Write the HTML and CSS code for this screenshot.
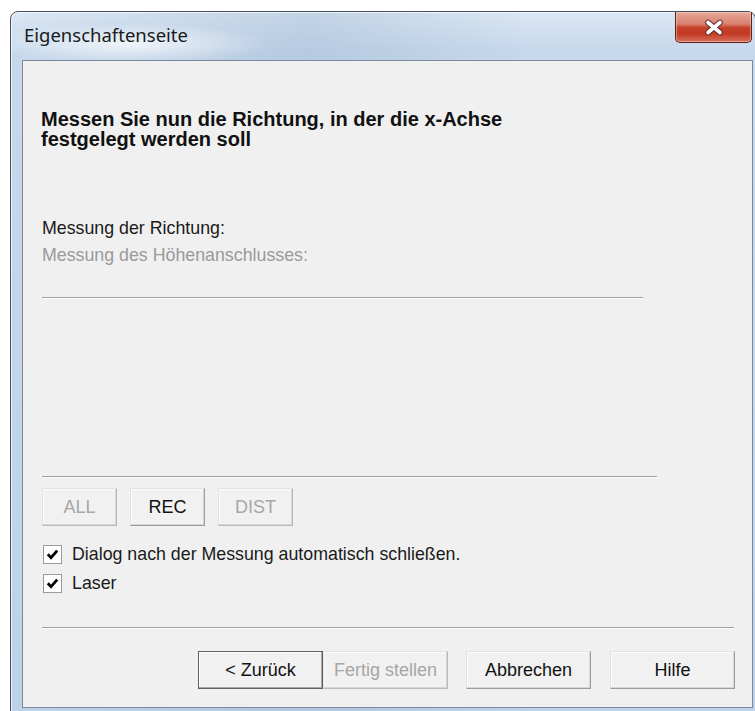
FILE: index.html
```html
<!DOCTYPE html>
<html lang="de">
<head>
<meta charset="utf-8">
<title>Eigenschaftenseite</title>
<link rel="stylesheet" href="styles.css">
</head>
<body>
<div class="window">
  <div class="titlebar">
    <span class="title">Eigenschaftenseite</span>
    <button class="close" type="button" aria-label="Schließen">
      <svg width="22" height="17" viewBox="0 0 22 17" aria-hidden="true">
        <path d="M5 3.5 L17 13.5 M17 3.5 L5 13.5" stroke="#5b2b25" stroke-width="5.6" stroke-linecap="round"/>
        <path d="M5 3.5 L17 13.5 M17 3.5 L5 13.5" stroke="#ffffff" stroke-width="3.6" stroke-linecap="round"/>
      </svg>
    </button>
  </div>
  <div class="client">
    <h1 class="heading">Messen Sie nun die Richtung, in der die x-Achse<br>festgelegt werden soll</h1>

    <div class="labels">
      <div class="label">Messung der Richtung:</div>
      <div class="label disabled">Messung des Höhenanschlusses:</div>
    </div>

    <div class="rule rule-top"></div>
    <div class="rule rule-mid"></div>

    <div class="tool-row">
      <button class="btn is-disabled" type="button">ALL</button>
      <button class="btn" type="button">REC</button>
      <button class="btn is-disabled" type="button">DIST</button>
    </div>

    <div class="checks">
      <label class="check">
        <span class="box"><svg width="17" height="17" viewBox="0 0 17 17" aria-hidden="true"><path d="M3.8 8.3 L7 11.6 L13.2 4.6" fill="none" stroke="#000" stroke-width="2.8"/></svg></span>
        <span>Dialog nach der Messung automatisch schließen.</span>
      </label>
      <label class="check">
        <span class="box"><svg width="17" height="17" viewBox="0 0 17 17" aria-hidden="true"><path d="M3.8 8.3 L7 11.6 L13.2 4.6" fill="none" stroke="#000" stroke-width="2.8"/></svg></span>
        <span>Laser</span>
      </label>
    </div>

    <div class="rule rule-bottom"></div>

    <div class="wizard-row">
      <div class="pair">
        <button class="btn wide is-default" type="button">&lt; Zurück</button>
        <button class="btn wide is-disabled" type="button">Fertig stellen</button>
      </div>
      <button class="btn wide" type="button">Abbrechen</button>
      <button class="btn wide" type="button">Hilfe</button>
    </div>
  </div>
</div>
</body>
</html>
```

FILE: styles.css
```css
html, body {
  margin: 0;
  padding: 0;
}

body {
  width: 755px;
  height: 711px;
  overflow: hidden;
  background: #ffffff;
  font-family: "Liberation Sans", Arial, sans-serif;
  color: #161616;
}

/* Aero-style window frame */
.window {
  margin: 11px 0 0 10px;
  width: 732px;
  height: 720px;
  padding: 0 1px 0 11px;
  border: 1px solid #46505c;
  border-radius: 8px 8px 0 0;
  background:
    radial-gradient(ellipse 200px 30px at 120px 32px, rgba(255,255,255,0.75), rgba(255,255,255,0) 70%),
    linear-gradient(90deg, rgba(255,255,255,0) 0, rgba(150,176,204,0.35) 300px, rgba(255,255,255,0) 520px),
    linear-gradient(180deg, #dbe7f4 0, #c6d8ec 40px, #bdd2ea 100%);
  box-shadow: inset 1px 1px 0 rgba(255,255,255,0.7);
}

.titlebar {
  display: flex;
  align-items: flex-start;
  height: 48px;
}

.title {
  margin: 12px 0 0 2px;
  font-family: "Noto Sans", "Open Sans", sans-serif;
  font-size: 18.5px;
  line-height: 22px;
  color: #1b1b1b;
}

.close {
  margin: 0 2px 0 auto;
  width: 77px;
  height: 31px;
  padding: 0;
  border: 1px solid #5e2118;
  border-top: none;
  border-radius: 0 0 5px 5px;
  background: linear-gradient(180deg, #e6a898 0, #d98170 40%, #c5402a 52%, #c33a24 72%, #d5705a 100%);
  box-shadow: inset 0 0 0 1px rgba(255,220,210,0.45);
  display: flex;
  align-items: center;
  justify-content: center;
}

.client {
  box-sizing: border-box;
  width: 731px;
  height: 648px;
  border: 1px solid #7d8998;
  background: #f0f0f0;
  padding: 0 0 0 19px;
  display: flex;
  flex-direction: column;
  align-items: flex-start;
}

.heading {
  margin: 48px 0 0 -1px;
  font-size: 20px;
  line-height: 20px;
  font-weight: bold;
  color: #111;
}

.labels {
  margin-top: 66px;
}

.label {
  font-size: 17.8px;
  line-height: 27px;
  color: #1a1a1a;
}

.label.disabled {
  color: #9a9a9a;
}

/* Etched separator lines */
.rule {
  height: 1px;
  background: #a0a0a0;
  border-bottom: 1px solid #ffffff;
}

.rule-top {
  width: 601px;
  margin-top: 28px;
}

.rule-mid {
  width: 615px;
  margin-top: 177px;
}

.rule-bottom {
  width: 692px;
  margin-top: 34px;
}

.tool-row {
  display: flex;
  gap: 13px;
  margin-top: 10px;
}

.btn {
  box-sizing: border-box;
  width: 75px;
  height: 38px;
  padding: 0;
  font-family: "Liberation Sans", Arial, sans-serif;
  font-size: 18px;
  color: #111;
  background: #f1f1f1;
  border: 1px solid;
  border-color: #e2e2e2 #9c9c9c #9c9c9c #e2e2e2;
  box-shadow: inset -1px -1px 0 #d6d6d6, inset 1px 1px 0 #fbfbfb;
}

.btn.is-disabled {
  color: #a6a6a6;
  border-color: #e3e3e3 #b9b9b9 #b9b9b9 #e3e3e3;
}

.btn.wide {
  width: 125px;
}

.btn.is-default {
  border: 1px solid #5f5f5f;
  box-shadow: inset -1px -1px 0 #a8a8a8, inset 1px 1px 0 #fdfdfd;
}

.checks {
  margin-top: 18px;
  display: flex;
  flex-direction: column;
  gap: 9px;
}

.check {
  display: flex;
  align-items: center;
  gap: 10px;
  height: 20px;
  font-size: 17.8px;
  color: #1a1a1a;
}

.box {
  box-sizing: border-box;
  width: 19px;
  height: 19px;
  margin-left: 1px;
  border: 1px solid #9a9a9a;
  background: #ffffff;
  display: flex;
  align-items: center;
  justify-content: center;
}

.wizard-row {
  display: flex;
  margin: 22px 0 0 156px;
}

.pair {
  display: flex;
  margin-right: 18px;
}

.wizard-row > .btn + .btn {
  margin-left: 19px;
}
```
